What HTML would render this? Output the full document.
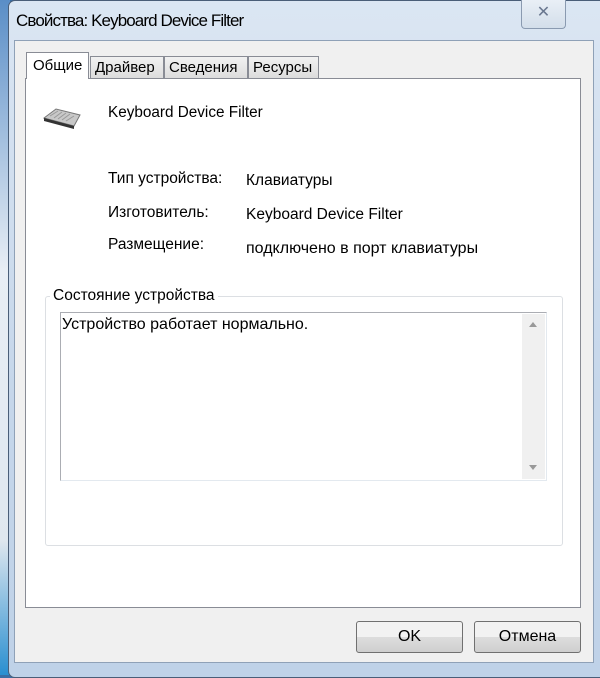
<!DOCTYPE html>
<html><head><meta charset="utf-8"><style>
*{margin:0;padding:0;box-sizing:border-box}
body{width:600px;height:675px;overflow:hidden;background:#3a6ea5;font-family:"Liberation Sans",sans-serif;font-size:15.5px;color:#000;position:relative}
.abs{position:absolute}
.frame{left:8px;top:0;width:600px;height:678px;background:linear-gradient(#dbe6f3,#c5d6ea 60%,#bfd2e8);border:1px solid #4a5e78;border-radius:7px 0 0 7px}
.client{left:14px;top:40px;width:580px;height:623px;background:#f0f0f0;border:1px solid #8fa1b7}
.panel{left:25px;top:78px;width:556px;height:530px;background:#fff;border:1px solid #898c95}
.tab{top:56px;height:23px;background:linear-gradient(#f2f2f2,#dcdcdc);border:1px solid #898c95;font-size:15px;padding:2px 4px 0}
.btn{top:621px;width:107px;height:32px;border:1px solid #707070;border-radius:3px;background:linear-gradient(#f2f2f2 50%,#dddddd 50%,#cfcfcf);text-align:center;line-height:30px;font-size:16px}
</style></head><body>
<div class="abs" style="left:0;top:0;width:10px;height:675px;background:linear-gradient(#5a8ec7,#e8eef5 40%,#dfe7ef 80%,#2a8fd0)"></div>
<div class="abs frame"></div>
<div class="abs" style="left:16px;top:11px;font-size:17px;letter-spacing:-0.9px">Свойства: Keyboard Device Filter</div>
<div class="abs" style="left:521px;top:0;width:45px;height:29px;border:1px solid #8a9ab0;border-top:none;border-radius:0 0 4px 4px;background:linear-gradient(#e9eff6,#d3deea);text-align:center;color:#6a7890;font-size:16px;line-height:26px">✕</div>
<div class="abs client"></div>
<div class="abs panel"></div>
<div class="abs tab" style="left:90px;width:74px">Драйвер</div>
<div class="abs tab" style="left:164px;width:84px">Сведения</div>
<div class="abs tab" style="left:248px;width:71px">Ресурсы</div>
<div class="abs tab" style="left:26px;top:52px;height:27px;width:63px;background:#fff;border-bottom:none;padding-top:4px;padding-left:6px">Общие</div>
<svg class="abs" style="left:42px;top:106px" width="40" height="24" viewBox="0 0 40 24"><path d="M2 12 L14 3 L38 9 L32 20 Z" fill="#c8c8c8" stroke="#777"/><path d="M2 12 L32 20 L32 23 L2 15 Z" fill="#333"/><path d="M8 10 L16 5 M12 12 L20 6 M16 13 L24 7 M20 14 L28 8 M24 15 L32 10" stroke="#999" stroke-width="1"/></svg>
<div class="abs" style="left:108px;top:104px;font-size:15.3px">Keyboard Device Filter</div>
<div class="abs" style="left:108px;top:170px">Тип устройства:</div>
<div class="abs" style="left:246px;top:172px">Клавиатуры</div>
<div class="abs" style="left:108px;top:204px">Изготовитель:</div>
<div class="abs" style="left:246px;top:206px">Keyboard Device Filter</div>
<div class="abs" style="left:108px;top:236px">Размещение:</div>
<div class="abs" style="left:246px;top:240px;font-size:16px">подключено в порт клавиатуры</div>
<div class="abs" style="left:45px;top:296px;width:518px;height:250px;border:1px solid #dcdfe3;border-radius:3px"></div>
<div class="abs" style="left:50px;top:287px;background:#fff;padding:0 3px">Состояние устройства</div>
<div class="abs" style="left:60px;top:312px;width:487px;height:169px;border:1px solid #abadb3;border-color:#abadb3 #e3e9ef #e3e9ef #abadb3"></div>
<div class="abs" style="left:522px;top:314px;width:23px;height:165px;background:#f0f0f0"></div>
<div class="abs" style="left:529px;top:322px;width:0;height:0;border:4px solid transparent;border-bottom:5px solid #999;border-top:none"></div>
<div class="abs" style="left:529px;top:465px;width:0;height:0;border:4px solid transparent;border-top:5px solid #999;border-bottom:none"></div>
<div class="abs" style="left:62px;top:316px;font-size:16px">Устройство работает нормально.</div>
<div class="abs btn" style="left:356px">OK</div>
<div class="abs btn" style="left:474px">Отмена</div>
</body></html>
